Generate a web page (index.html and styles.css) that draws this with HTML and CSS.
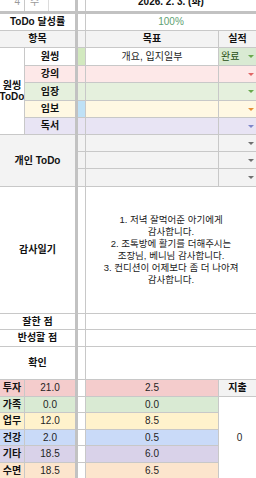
FILE: index.html
```html
<!DOCTYPE html>
<html lang="ko">
<head>
<meta charset="utf-8">
<title>ToDo</title>
<link rel="stylesheet" href="styles.css">
</head>
<body>
<div class="sheet">
  <div class="vsep"></div>
  <div class="hsep"></div>

  <div class="c r1 ca right"><span class="top muted">4</span></div>
  <div class="c r1 cb left"><span class="top muted day">수</span></div>
  <div class="c r1 cc"></div>
  <div class="c r1 cde"><span class="top b">2026. 2. 3. (화)</span></div>

  <div class="c cab b">ToDo 달성률</div>
  <div class="c cc"></div>
  <div class="c cde pct">100%</div>

  <div class="c cab b hd">항목</div>
  <div class="c cc hd"></div>
  <div class="c cd b hd">목표</div>
  <div class="c ce b hd">실적</div>

  <div class="c ca rs5 b stack">원씽<br>ToDo</div>
  <div class="c cb b">원씽</div>
  <div class="c cc c-green"></div>
  <div class="c cd">개요, 입지일부</div>
  <div class="c ce dd done"><span class="chip">완료</span><i class="arr"></i></div>

  <div class="c cb b p-pink">강의</div>
  <div class="c cc p-pink"></div>
  <div class="c cd p-pink"></div>
  <div class="c ce dd p-pink a-red"><span></span><i class="arr"></i></div>

  <div class="c cb b p-green">임장</div>
  <div class="c cc p-green"></div>
  <div class="c cd p-green"></div>
  <div class="c ce dd p-green a-green"><span></span><i class="arr"></i></div>

  <div class="c cb b p-yellow">임보</div>
  <div class="c cc c-blue"></div>
  <div class="c cd p-yellow"></div>
  <div class="c ce dd p-yellow a-orange"><span></span><i class="arr"></i></div>

  <div class="c cb b p-purple">독서</div>
  <div class="c cc p-purple"></div>
  <div class="c cd p-purple"></div>
  <div class="c ce dd p-purple a-purple"><span></span><i class="arr"></i></div>

  <div class="c cab rs3 b hd">개인 ToDo</div>
  <div class="c cc hd"></div>
  <div class="c cd hd"></div>
  <div class="c ce dd hd a-gray"><span></span><i class="arr"></i></div>
  <div class="c cc hd"></div>
  <div class="c cd hd"></div>
  <div class="c ce dd hd a-gray"><span></span><i class="arr"></i></div>
  <div class="c cc hd"></div>
  <div class="c cd hd"></div>
  <div class="c ce dd hd a-gray"><span></span><i class="arr"></i></div>

  <div class="c cab b">감사일기</div>
  <div class="c cc"></div>
  <div class="c cde diary">1. 저녁 잘먹어준 아기에게<br>감사합니다.<br>2. 조톡방에 활기를 더해주시는<br>조장님, 베니님 감사합니다.<br>3. 컨디션이 어제보다 좀 더 나아져<br>감사합니다.</div>

  <div class="c cab b">잘한 점</div>
  <div class="c cc"></div>
  <div class="c cde"></div>

  <div class="c cab b">반성할 점</div>
  <div class="c cc"></div>
  <div class="c cde"></div>

  <div class="c cab b">확인</div>
  <div class="c cc"></div>
  <div class="c cde"></div>

  <div class="c ca b s-pink">투자</div>
  <div class="c cb s-pink">21.0</div>
  <div class="c cc"></div>
  <div class="c cd s-pink">2.5</div>
  <div class="c ce b hd">지출</div>

  <div class="c ca b s-green">가족</div>
  <div class="c cb s-green">0.0</div>
  <div class="c cc"></div>
  <div class="c cd s-green">0.0</div>
  <div class="c ce rs5 total">0</div>

  <div class="c ca b s-yellow">업무</div>
  <div class="c cb s-yellow">12.0</div>
  <div class="c cc"></div>
  <div class="c cd s-yellow">8.5</div>

  <div class="c ca b s-blue">건강</div>
  <div class="c cb s-blue">2.0</div>
  <div class="c cc"></div>
  <div class="c cd s-blue">0.5</div>

  <div class="c ca b s-purple">기타</div>
  <div class="c cb s-purple">18.5</div>
  <div class="c cc"></div>
  <div class="c cd s-purple">6.0</div>

  <div class="c ca b s-orange">수면</div>
  <div class="c cb s-orange">18.5</div>
  <div class="c cc"></div>
  <div class="c cd s-orange">6.5</div>
</div>
</body>
</html>
```

FILE: styles.css
```css
* { box-sizing: border-box; margin: 0; padding: 0; }
html, body { width: 256px; height: 478px; overflow: hidden; background: #fff; }
body {
  font-family: "Liberation Sans", "Noto Sans CJK KR", sans-serif;
  font-size: 10px;
  color: #1f1f1f;
}
.sheet {
  display: grid;
  grid-template-columns: 25px 50px 3px 8px 133px 37px;
  grid-template-rows: 11px 3px 17px 17px 18px 17px 18px 17px 17px 17px 17px 18px 127px 16px 17px 33px 17px 16px 17px 16px 17px 16px;
}
.vsep { grid-column: 3; grid-row: 1 / -1; background: #c2c2c2; }
.hsep { grid-column: 1 / -1; grid-row: 2; background: #c2c2c2; }

.c {
  border-right: 1px solid #c8c8c8;
  border-bottom: 1px solid #c8c8c8;
  display: flex;
  align-items: center;
  justify-content: center;
  white-space: nowrap;
  overflow: hidden;
  line-height: 12px;
}
.ca { grid-column: 1; }
.cb { grid-column: 2; border-right: 0; }
.cab { grid-column: 1 / 3; border-right: 0; }
.cc { grid-column: 4; }
.cd { grid-column: 5; }
.ce { grid-column: 6; border-right: 0; }
.cde { grid-column: 5 / 7; border-right: 0; }
.rs3 { grid-row: span 3; }
.rs5 { grid-row: span 5; }

.b { font-weight: 700; color: #111; }
.hd { background: #f3f3f3; }

.r1 { align-items: flex-start; border-bottom: 0; }
.r1.right { justify-content: flex-end; padding-right: 4px; }
.r1.left { justify-content: flex-start; }
.top { display: block; line-height: 10px; margin-top: -3px; }
.muted { color: #9a9a9a; }
.day { width: 24px; padding-left: 5px; border-right: 1px solid #dcdcdc; height: 14px; }

.pct { color: #5e9f72; }
.stack { text-align: center; line-height: 11px; white-space: normal; }

.dd { justify-content: space-between; padding: 0 2px 0 2px; }
.arr {
  display: block;
  width: 0; height: 0;
  border-left: 3px solid transparent;
  border-right: 3px solid transparent;
  border-top: 3px solid currentColor;
}
.done { background: #d9ead3; color: #6aa84f; }
.chip { color: #274e13; }
.a-red { color: #e06666; }
.a-green { color: #6aa84f; }
.a-orange { color: #e69138; }
.a-purple { color: #7e86c9; }
.a-gray { color: #707070; }

.p-pink { background: #fde8e8; }
.p-green { background: #e5f0dd; }
.p-yellow { background: #fff8e3; }
.p-purple { background: #e8e4f4; }
.c-green { background: #d2e9bf; }
.c-blue { background: #bfe1f6; }

.diary { white-space: normal; text-align: center; font-size: 9.5px; line-height: 12px; color: #222; }

.s-pink { background: #f4cccc; }
.s-green { background: #d9ead3; }
.s-yellow { background: #fff2cc; }
.s-blue { background: #c9daf8; }
.s-purple { background: #d9d2e9; }
.s-orange { background: #fce5cd; }
.total { padding-left: 4px; }
```
